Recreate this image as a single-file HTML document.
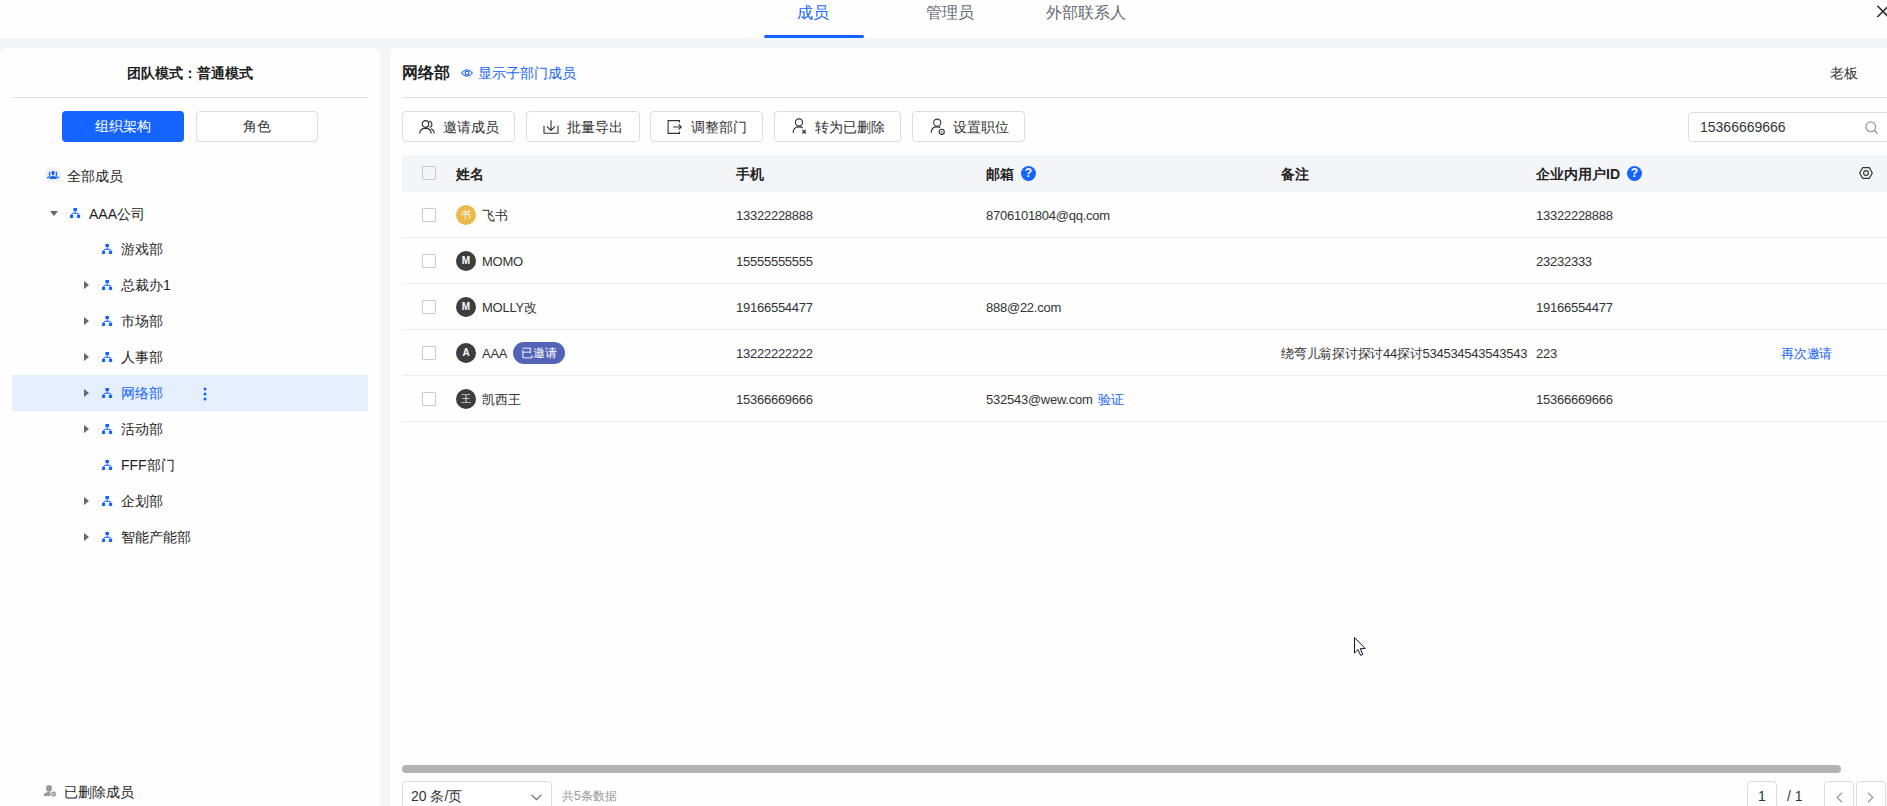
<!DOCTYPE html>
<html><head><meta charset="utf-8">
<style>
*{box-sizing:border-box;margin:0;padding:0}
html,body{width:1887px;height:806px;overflow:hidden}
body{background:#fefefe;font-family:"Liberation Sans",sans-serif;color:#333;font-size:14px;position:relative}
.a{position:absolute;white-space:nowrap}
.t{line-height:20px}
#band{left:0;top:38px;width:1887px;height:768px;background:#f4f5f8}
#lp{left:0;top:48px;width:380px;height:758px;background:#fefefe;border-radius:8px 8px 0 0}
#gap{left:380px;top:38px;width:10px;height:768px;background:#f4f5f8}
#rp{left:390px;top:48px;width:1497px;height:758px;background:#fefefe;border-radius:8px 0 0 0}
.tab{top:3px;font-size:16px;line-height:20px;color:#646a73}
.btn{height:31px;border:1px solid #dcdcdc;border-radius:4px;background:#fff}
.line{height:1px;background:#e0e0e0}
.tree{font-size:14px;line-height:20px;color:#1f1f1f}
.caret{width:0;height:0;border-top:4.5px solid transparent;border-bottom:4.5px solid transparent;border-left:5px solid #666}
.hd{font-weight:bold;color:#222;line-height:20px}
.cb{width:14px;height:14px;border:1.5px solid #c9cbcd;border-radius:1px;background:#fff}
.rl{height:1px;background:#ebedf0;left:402px;width:1485px}
.av{width:20px;height:20px;border-radius:50%;background:#3d3d3d;color:#fff;font-size:10px;font-weight:bold;text-align:center;line-height:20px}
.cell{font-size:13px;line-height:20px;color:#333;letter-spacing:-0.25px;margin-top:1px}
.q{width:15px;height:15px;border-radius:50%;background:#1664ff;color:#fff;font-size:12px;font-weight:bold;text-align:center;line-height:15px}
</style></head><body>
<div class="a" id="band"></div>
<div class="a" id="gap"></div>
<div class="a" id="lp"></div>
<div class="a" id="rp"></div>

<!-- top tabs -->
<div class="a tab" style="left:797px;color:#1664ff">成员</div>
<div class="a" style="left:764px;top:35px;width:100px;height:3px;border-radius:2px;background:#1664ff"></div>
<div class="a tab" style="left:926px">管理员</div>
<div class="a tab" style="left:1046px">外部联系人</div>


<!-- left panel -->
<div class="a" style="left:0;top:63px;width:380px;text-align:center;font-size:14px;font-weight:bold;line-height:20px;color:#1f1f1f">团队模式：普通模式</div>
<div class="a line" style="left:12px;top:97px;width:356px"></div>
<div class="a" style="left:62px;top:111px;width:122px;height:31px;border-radius:4px;background:#1664ff;color:#fff;text-align:center;line-height:31px;font-size:14px">组织架构</div>
<div class="a btn" style="left:196px;top:111px;width:122px;text-align:center;line-height:29px;color:#333">角色</div>

<svg class="a" style="left:45px;top:167px" width="16" height="16" viewBox="0 0 16 16"><circle cx="8" cy="8" r="8" fill="#eff1f6"/><path d="M4.8 5.3Q3.9 7 4.8 8.6M11.2 5.3Q12.1 7 11.2 8.6" stroke="#1664ff" stroke-width="1.3" fill="none" stroke-linecap="round"/><ellipse cx="8" cy="6.1" rx="1.7" ry="2.3" fill="#1664ff"/><path d="M4.4 12V10.6Q4.4 9 8 9Q11.6 9 11.6 10.6V12Z" fill="#1664ff"/><path d="M2.4 10.8L4 9.7M13.6 10.8L12 9.7" stroke="#1664ff" stroke-width="1.2" stroke-linecap="round"/></svg>
<div class="a tree" style="left:67px;top:166px">全部成员</div>

<div class="a" style="left:12px;top:375px;width:356px;height:36px;background:#e6effd"></div>
<div class="a" style="left:50px;top:211px;width:0;height:0;border-left:4.5px solid transparent;border-right:4.5px solid transparent;border-top:5px solid #666"></div>
<svg class="a" style="left:70px;top:208px" width="11" height="10" viewBox="0 0 11 10"><rect x="3.4" y="0" width="3.6" height="3" fill="#1664ff"/><path d="M5.2 3V5.3M1.6 6.9L2.3 5.3H8.2L8.9 6.9" stroke="#1664ff" stroke-width="1" fill="none"/><rect x="0" y="6.9" width="3.1" height="3.1" fill="#1664ff"/><rect x="6.9" y="6.9" width="3.2" height="3.1" fill="#1664ff"/></svg>
<div class="a tree" style="left:89px;top:204px">AAA公司</div>
<svg class="a" style="left:102px;top:244px" width="11" height="10" viewBox="0 0 11 10"><rect x="3.4" y="0" width="3.6" height="3" fill="#1664ff"/><path d="M5.2 3V5.3M1.6 6.9L2.3 5.3H8.2L8.9 6.9" stroke="#1664ff" stroke-width="1" fill="none"/><rect x="0" y="6.9" width="3.1" height="3.1" fill="#1664ff"/><rect x="6.9" y="6.9" width="3.2" height="3.1" fill="#1664ff"/></svg><div class="a tree" style="left:121px;top:239px">游戏部</div>
<div class="a caret" style="left:84px;top:280.5px"></div><svg class="a" style="left:102px;top:280px" width="11" height="10" viewBox="0 0 11 10"><rect x="3.4" y="0" width="3.6" height="3" fill="#1664ff"/><path d="M5.2 3V5.3M1.6 6.9L2.3 5.3H8.2L8.9 6.9" stroke="#1664ff" stroke-width="1" fill="none"/><rect x="0" y="6.9" width="3.1" height="3.1" fill="#1664ff"/><rect x="6.9" y="6.9" width="3.2" height="3.1" fill="#1664ff"/></svg><div class="a tree" style="left:121px;top:275px">总裁办1</div>
<div class="a caret" style="left:84px;top:316.5px"></div><svg class="a" style="left:102px;top:316px" width="11" height="10" viewBox="0 0 11 10"><rect x="3.4" y="0" width="3.6" height="3" fill="#1664ff"/><path d="M5.2 3V5.3M1.6 6.9L2.3 5.3H8.2L8.9 6.9" stroke="#1664ff" stroke-width="1" fill="none"/><rect x="0" y="6.9" width="3.1" height="3.1" fill="#1664ff"/><rect x="6.9" y="6.9" width="3.2" height="3.1" fill="#1664ff"/></svg><div class="a tree" style="left:121px;top:311px">市场部</div>
<div class="a caret" style="left:84px;top:352.5px"></div><svg class="a" style="left:102px;top:352px" width="11" height="10" viewBox="0 0 11 10"><rect x="3.4" y="0" width="3.6" height="3" fill="#1664ff"/><path d="M5.2 3V5.3M1.6 6.9L2.3 5.3H8.2L8.9 6.9" stroke="#1664ff" stroke-width="1" fill="none"/><rect x="0" y="6.9" width="3.1" height="3.1" fill="#1664ff"/><rect x="6.9" y="6.9" width="3.2" height="3.1" fill="#1664ff"/></svg><div class="a tree" style="left:121px;top:347px">人事部</div>
<div class="a caret" style="left:84px;top:388.5px"></div><svg class="a" style="left:102px;top:388px" width="11" height="10" viewBox="0 0 11 10"><rect x="3.4" y="0" width="3.6" height="3" fill="#1664ff"/><path d="M5.2 3V5.3M1.6 6.9L2.3 5.3H8.2L8.9 6.9" stroke="#1664ff" stroke-width="1" fill="none"/><rect x="0" y="6.9" width="3.1" height="3.1" fill="#1664ff"/><rect x="6.9" y="6.9" width="3.2" height="3.1" fill="#1664ff"/></svg><div class="a tree" style="left:121px;top:383px;color:#1664ff">网络部</div>
<div class="a caret" style="left:84px;top:424.5px"></div><svg class="a" style="left:102px;top:424px" width="11" height="10" viewBox="0 0 11 10"><rect x="3.4" y="0" width="3.6" height="3" fill="#1664ff"/><path d="M5.2 3V5.3M1.6 6.9L2.3 5.3H8.2L8.9 6.9" stroke="#1664ff" stroke-width="1" fill="none"/><rect x="0" y="6.9" width="3.1" height="3.1" fill="#1664ff"/><rect x="6.9" y="6.9" width="3.2" height="3.1" fill="#1664ff"/></svg><div class="a tree" style="left:121px;top:419px">活动部</div>
<svg class="a" style="left:102px;top:460px" width="11" height="10" viewBox="0 0 11 10"><rect x="3.4" y="0" width="3.6" height="3" fill="#1664ff"/><path d="M5.2 3V5.3M1.6 6.9L2.3 5.3H8.2L8.9 6.9" stroke="#1664ff" stroke-width="1" fill="none"/><rect x="0" y="6.9" width="3.1" height="3.1" fill="#1664ff"/><rect x="6.9" y="6.9" width="3.2" height="3.1" fill="#1664ff"/></svg><div class="a tree" style="left:121px;top:455px">FFF部门</div>
<div class="a caret" style="left:84px;top:496.5px"></div><svg class="a" style="left:102px;top:496px" width="11" height="10" viewBox="0 0 11 10"><rect x="3.4" y="0" width="3.6" height="3" fill="#1664ff"/><path d="M5.2 3V5.3M1.6 6.9L2.3 5.3H8.2L8.9 6.9" stroke="#1664ff" stroke-width="1" fill="none"/><rect x="0" y="6.9" width="3.1" height="3.1" fill="#1664ff"/><rect x="6.9" y="6.9" width="3.2" height="3.1" fill="#1664ff"/></svg><div class="a tree" style="left:121px;top:491px">企划部</div>
<div class="a caret" style="left:84px;top:532.5px"></div><svg class="a" style="left:102px;top:532px" width="11" height="10" viewBox="0 0 11 10"><rect x="3.4" y="0" width="3.6" height="3" fill="#1664ff"/><path d="M5.2 3V5.3M1.6 6.9L2.3 5.3H8.2L8.9 6.9" stroke="#1664ff" stroke-width="1" fill="none"/><rect x="0" y="6.9" width="3.1" height="3.1" fill="#1664ff"/><rect x="6.9" y="6.9" width="3.2" height="3.1" fill="#1664ff"/></svg><div class="a tree" style="left:121px;top:527px">智能产能部</div>
<svg class="a" style="left:203px;top:386.5px" width="4" height="14" viewBox="0 0 4 14"><circle cx="2" cy="2" r="1.5" fill="#1664ff"/><circle cx="2" cy="7" r="1.5" fill="#1664ff"/><circle cx="2" cy="12" r="1.5" fill="#1664ff"/></svg>
<svg class="a" style="left:43px;top:784px" width="15" height="14" viewBox="0 0 15 14"><ellipse cx="6" cy="4.4" rx="3" ry="3.4" fill="#999"/><path d="M0.7 12 Q1 7.9 6 7.9 Q8.2 7.9 9.3 8.6 L8.6 12Z" fill="#999"/><circle cx="10.6" cy="10.1" r="3" fill="#999" stroke="#fefefe" stroke-width="0.9"/><path d="M9.4 10.2H11.8" stroke="#fff" stroke-width="0.9"/></svg>
<div class="a tree" style="left:64px;top:782px">已删除成员</div>

<!-- right panel header -->
<div class="a" style="left:402px;top:62px;font-size:16px;line-height:22px;color:#1f1f1f;font-weight:bold">网络部</div>
<svg class="a" style="left:461px;top:68px" width="12" height="10" viewBox="0 0 12 10"><path d="M0.6 5 Q6 -1.6 11.4 5 Q6 11.6 0.6 5Z" fill="none" stroke="#1664ff" stroke-width="1.1"/><circle cx="6" cy="5" r="1.9" fill="none" stroke="#1664ff" stroke-width="1.1"/></svg>
<div class="a t" style="left:478px;top:63px;color:#1664ff">显示子部门成员</div>
<div class="a t" style="left:1830px;top:63px;color:#333">老板</div>
<div class="a line" style="left:402px;top:97px;width:1485px"></div>
<div class="a btn" style="left:402px;top:111px;width:113px"></div><div class="a" style="left:419px;top:120px;line-height:0"><svg width="16" height="14" viewBox="0 0 16 14"><circle cx="6.5" cy="4" r="3.3" fill="none" stroke="#333" stroke-width="1.2"/><path d="M0.8 13.5 Q0.8 8.3 6.5 8.3 Q12.2 8.3 12.2 13.5" fill="none" stroke="#333" stroke-width="1.2"/><path d="M10.3 1.2 A3.3 3.3 0 0 1 10.8 7.5 M12 8.8 Q15.2 10 15.2 13.5" fill="none" stroke="#333" stroke-width="1.2"/></svg></div><div class="a t" style="left:443px;top:117px">邀请成员</div>
<div class="a btn" style="left:526px;top:111px;width:114px"></div><div class="a" style="left:543px;top:120px;line-height:0"><svg width="16" height="14" viewBox="0 0 16 14"><path d="M8 0.3V10.4M3.9 6.3L8 10.4L12.1 6.3M1 5.8V13.3H15V5.8" fill="none" stroke="#333" stroke-width="1.1"/></svg></div><div class="a t" style="left:567px;top:117px">批量导出</div>
<div class="a btn" style="left:650px;top:111px;width:113px"></div><div class="a" style="left:667px;top:120px;line-height:0"><svg width="16" height="14" viewBox="0 0 16 14"><path d="M12.5 2.4V0.6H1.1V13.4H12.5V11.6" fill="none" stroke="#333" stroke-width="1.1"/><path d="M6.2 7H14.2M11.6 4.3L14.3 7L11.6 9.7" fill="none" stroke="#333" stroke-width="1.1"/></svg></div><div class="a t" style="left:691px;top:117px">调整部门</div>
<div class="a btn" style="left:774px;top:111px;width:127px"></div><div class="a" style="left:792px;top:118px;line-height:0"><svg width="16" height="17" viewBox="0 0 16 17"><circle cx="7" cy="4.5" r="3.6" fill="none" stroke="#333" stroke-width="1.1"/><path d="M1.2 15 Q1.2 8.9 7 8.9 Q9.5 8.9 10.8 10.2" fill="none" stroke="#333" stroke-width="1.1"/><path d="M10.4 12L13.8 15.5M13.8 12L10.4 15.5" fill="none" stroke="#333" stroke-width="1.2"/></svg></div><div class="a t" style="left:815px;top:117px">转为已删除</div>
<div class="a btn" style="left:912px;top:111px;width:113px"></div><div class="a" style="left:930px;top:118px;line-height:0"><svg width="16" height="17" viewBox="0 0 16 17"><circle cx="7.2" cy="4.7" r="3.6" fill="none" stroke="#333" stroke-width="1.1"/><path d="M1.2 14.8 Q1.2 8.9 7.2 8.9 Q9.2 8.9 10.2 9.6" fill="none" stroke="#333" stroke-width="1.1"/><circle cx="11.7" cy="13.8" r="2.6" fill="none" stroke="#333" stroke-width="1.1"/><circle cx="11.7" cy="13.8" r="0.8" fill="#333"/></svg></div><div class="a t" style="left:953px;top:117px">设置职位</div>
<div class="a btn" style="left:1688px;top:112px;width:210px;height:30px"></div><div class="a" style="left:1700px;top:117px;font-size:14px;line-height:20px;color:#333">15366669666</div><svg class="a" style="left:1865px;top:121px" width="13" height="13" viewBox="0 0 13 13"><circle cx="5.8" cy="5.8" r="4.9" fill="none" stroke="#999" stroke-width="1.3"/><path d="M9.4 9.4L12.2 12.2" stroke="#999" stroke-width="1.4" stroke-linecap="round"/></svg>

<!-- table -->
<div class="a" style="left:402px;top:155px;width:1485px;height:37px;background:#f4f5f8"></div>
<div class="a cb" style="left:422px;top:166px;background:transparent"></div>
<div class="a hd" style="left:456px;top:164px">姓名</div>
<div class="a hd" style="left:736px;top:164px">手机</div>
<div class="a hd" style="left:986px;top:164px">邮箱</div>
<div class="a q" style="left:1021px;top:165.5px">?</div>
<div class="a hd" style="left:1281px;top:164px">备注</div>
<div class="a hd" style="left:1536px;top:164px">企业内用户ID</div>
<div class="a q" style="left:1627px;top:165.5px">?</div>
<svg class="a" style="left:1859px;top:167px" width="14" height="12" viewBox="0 0 14 12"><path d="M3.6 0.7H10.4L13.3 6L10.4 11.3H3.6L0.7 6Z" fill="none" stroke="#333" stroke-width="1.2" stroke-linejoin="round"/><circle cx="7" cy="6" r="2.4" fill="none" stroke="#333" stroke-width="1.1"/></svg>
<div class="a cb" style="left:422px;top:208px"></div><div class="a av" style="left:456px;top:205px;background:#ebb94b;font-weight:normal">书</div><div class="a cell" style="left:482px;top:205px">飞书</div><div class="a cell" style="left:736px;top:205px">13322228888</div><div class="a cell" style="left:986px;top:205px">8706101804@qq.com</div><div class="a cell" style="left:1536px;top:205px">13322228888</div><div class="a rl" style="top:237px"></div>
<div class="a cb" style="left:422px;top:254px"></div><div class="a av" style="left:456px;top:251px;background:#3d3d3d">M</div><div class="a cell" style="left:482px;top:251px">MOMO</div><div class="a cell" style="left:736px;top:251px">15555555555</div><div class="a cell" style="left:1536px;top:251px">23232333</div><div class="a rl" style="top:283px"></div>
<div class="a cb" style="left:422px;top:300px"></div><div class="a av" style="left:456px;top:297px;background:#3d3d3d">M</div><div class="a cell" style="left:482px;top:297px">MOLLY改</div><div class="a cell" style="left:736px;top:297px">19166554477</div><div class="a cell" style="left:986px;top:297px">888@22.com</div><div class="a cell" style="left:1536px;top:297px">19166554477</div><div class="a rl" style="top:329px"></div>
<div class="a cb" style="left:422px;top:346px"></div><div class="a av" style="left:456px;top:343px;background:#3d3d3d">A</div><div class="a cell" style="left:482px;top:343px">AAA</div><div class="a cell" style="left:736px;top:343px">13222222222</div><div class="a cell" style="left:1281px;top:343px">绕弯儿翁探讨探讨44探讨534534543543543</div><div class="a cell" style="left:1536px;top:343px">223</div><div class="a rl" style="top:375px"></div>
<div class="a cb" style="left:422px;top:392px"></div><div class="a av" style="left:456px;top:389px;background:#3d3d3d;font-weight:normal">王</div><div class="a cell" style="left:482px;top:389px">凯西王</div><div class="a cell" style="left:736px;top:389px">15366669666</div><div class="a cell" style="left:986px;top:389px">532543@wew.com</div><div class="a cell" style="left:1536px;top:389px">15366669666</div><div class="a rl" style="top:421px"></div>
<div class="a" style="left:513px;top:342px;width:52px;height:22px;border-radius:11px;background:#5263b8;color:#fff;font-size:12px;line-height:22px;text-align:center">已邀请</div>
<div class="a cell" style="left:1781px;top:343px;color:#1664ff">再次邀请</div>
<div class="a cell" style="left:1098px;top:389px;color:#1664ff">验证</div>
<div class="a" style="left:402px;top:765px;width:1439px;height:8px;border-radius:4px;background:#b3b3b3"></div>
<div class="a btn" style="left:402px;top:781px;width:150px;height:34px"></div>
<div class="a" style="left:411px;top:786px;font-size:14px;line-height:20px;color:#333">20 条/页</div>
<svg class="a" style="left:531px;top:794px" width="11" height="7" viewBox="0 0 11 7"><path d="M0.7 0.8L5.5 5.6L10.3 0.8" fill="none" stroke="#666" stroke-width="1.2"/></svg>
<div class="a" style="left:562px;top:787px;font-size:12px;line-height:18px;color:#999">共5条数据</div>
<div class="a btn" style="left:1747px;top:781px;width:30px;height:34px"></div>
<div class="a" style="left:1758px;top:786px;font-size:14px;line-height:20px;color:#333">1</div>
<div class="a" style="left:1787px;top:786px;font-size:14px;line-height:20px;color:#333">/ 1</div>
<div class="a btn" style="left:1824px;top:781px;width:30px;height:34px"></div>
<div class="a btn" style="left:1856px;top:781px;width:30px;height:34px"></div>
<svg class="a" style="left:1836px;top:792px" width="7" height="11" viewBox="0 0 7 11"><path d="M6 0.8L1.2 5.5L6 10.2" fill="none" stroke="#999" stroke-width="1.2"/></svg>
<svg class="a" style="left:1867px;top:792px" width="7" height="11" viewBox="0 0 7 11"><path d="M1 0.8L5.8 5.5L1 10.2" fill="none" stroke="#999" stroke-width="1.2"/></svg>
<svg class="a" style="left:1876px;top:4px" width="14" height="15" viewBox="0 0 14 15"><path d="M1.3 1.8L12.5 13M12.5 1.8L1.3 13" stroke="#333" stroke-width="1.6"/></svg>
<svg class="a" style="left:1353px;top:636px" width="14" height="22" viewBox="0 0 14 22"><path d="M1.5 1.5V17L5 13.6L7.6 19.4L9.8 18.4L7.3 12.6H12.3Z" fill="#fff" stroke="#1a1a2e" stroke-width="1" stroke-linejoin="round"/></svg>
</body></html>
